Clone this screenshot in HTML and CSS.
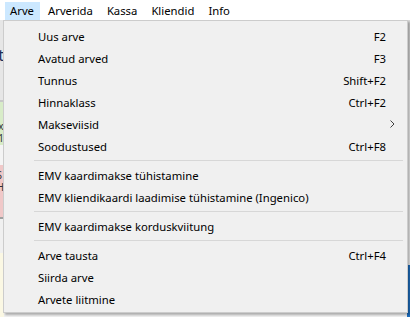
FILE: index.html
```html
<!DOCTYPE html>
<html lang="et">
  <head>
    <meta charset="UTF-8" />
    <title>Arve</title>
    <link rel="stylesheet" href="styles.css">
  </head>
  <body>
    <div class="menubar">
      <span class="menubar-item active">Arve</span>
      <span class="menubar-item">Arverida</span>
      <span class="menubar-item">Kassa</span>
      <span class="menubar-item">Kliendid</span>
      <span class="menubar-item">Info</span>
    </div>

    <div class="app">
      <div class="side side-left">
        <div class="band band-grey">
          <span class="peek">t</span>
        </div>
        <div class="band band-green"><span class="peek small">x<br>1</span></div>
        <div class="band band-white"></div>
        <div class="band band-pink"><span class="peek small">S<br>H</span></div>
        <div class="band band-white2"></div>
        <div class="band band-yellow"></div>
      </div>
      <div class="side side-right">
        <div class="band band-grey"></div>
        <div class="band band-light"></div>
        <div class="band band-blue"></div>
      </div>
    </div>

    <!-- avatud rippmenüü -->
    <div class="dropdown">
      <div class="item"><span>Uus arve</span><span class="key">F2</span></div>
      <div class="item"><span>Avatud arved</span><span class="key">F3</span></div>
      <div class="item"><span>Tunnus</span><span class="key">Shift+F2</span></div>
      <div class="item"><span>Hinnaklass</span><span class="key">Ctrl+F2</span></div>
      <div class="item">
        <span>Makseviisid</span>
        <svg class="arrow" width="5" height="8" viewBox="0 0 5 8">
          <path d="M0.5 0.5 L4 4 L0.5 7.5" fill="none" stroke="#404040" stroke-width="1" />
        </svg>
      </div>
      <div class="item"><span>Soodustused</span><span class="key">Ctrl+F8</span></div>
      <div class="sep"></div>
      <div class="item"><span>EMV kaardimakse tühistamine</span></div>
      <div class="item"><span>EMV kliendikaardi laadimise tühistamine (Ingenico)</span></div>
      <div class="sep"></div>
      <div class="item"><span>EMV kaardimakse korduskviitung</span></div>
      <div class="sep"></div>
      <div class="item"><span>Arve tausta</span><span class="key">Ctrl+F4</span></div>
      <div class="item"><span>Siirda arve</span></div>
      <div class="item"><span>Arvete liitmine</span></div>
    </div>
  </body>
</html>
```

FILE: styles.css
```css
body {
  margin: 0;
  width: 410px;
  height: 317px;
  overflow: hidden;
  background: #f0f0f0;
  font-family: "Noto Sans", "Open Sans", sans-serif;
  font-size: 11.3px;
  color: #000000;
  position: relative;
}
.menubar {
  height: 20px;
  background: #ffffff;
  display: flex;
  align-items: flex-end;
  padding-left: 5px;
  box-sizing: border-box;
}
.menubar-item {
  height: 18px;
  line-height: 17px;
  padding: 0 7px;
  box-sizing: border-box;
}
.menubar-item.active {
  background: #cce8ff;
  width: 35px;
  padding: 0 0 0 5px;
  margin-right: 1px;
}
.app {
  height: 297px;
  display: flex;
  justify-content: space-between;
}
.side {
  width: 4px;
  display: flex;
  flex-direction: column;
  overflow: hidden;
}
.side-right {
  width: 3px;
}
.band {
  position: relative;
  overflow: hidden;
}
.peek {
  position: absolute;
  right: 0;
  color: #1a2f5c;
  font-size: 16px;
}
.peek.small {
  font-size: 10px;
  line-height: 12px;
  color: #333333;
}
.side-left .band-grey {
  height: 80px;
  background: #e6e6e6;
}
.side-left .band-grey .peek {
  top: 24px;
}
.side-left .band-green {
  height: 43px;
  background: #d8ecc8;
  border-top: 2px solid #c8c8c8;
}
.side-left .band-green .peek {
  top: 18px;
}
.side-left .band-white {
  height: 20px;
  background: #f4f4f4;
}
.side-left .band-pink {
  height: 52px;
  background: #f0c8c8;
}
.side-left .band-pink .peek {
  top: 4px;
}
.side-left .band-white2 {
  height: 34px;
  background: #f0f0f0;
  border-top: 2px solid #a0a0a0;
}
.side-left .band-yellow {
  flex: 1;
  background: #fbf8e4;
}
.side-right .band-grey {
  height: 60px;
  background: #d8d8d8;
}
.side-right .band-light {
  height: 185px;
  background: #f2f2f2;
}
.side-right .band-blue {
  flex: 1;
  background: #1e6fc0;
}
.dropdown {
  position: absolute;
  left: 3px;
  top: 20px;
  width: 405px;
  height: 293px;
  box-sizing: border-box;
  padding: 4px 2px 2px 2px;
  background: #f0f0f0;
  border: 1px solid #cccccc;
  box-shadow: 2px 2px 2px rgba(0, 0, 0, 0.28);
}
.item {
  height: 22px;
  display: flex;
  align-items: center;
  justify-content: space-between;
  padding: 0 19px 0 32px;
}
.key {
  text-align: right;
}
.arrow {
  margin-right: -9px;
}
.sep {
  height: 1px;
  background: #d7d7d7;
  margin: 3px 2px 3px 28px;
}
```
